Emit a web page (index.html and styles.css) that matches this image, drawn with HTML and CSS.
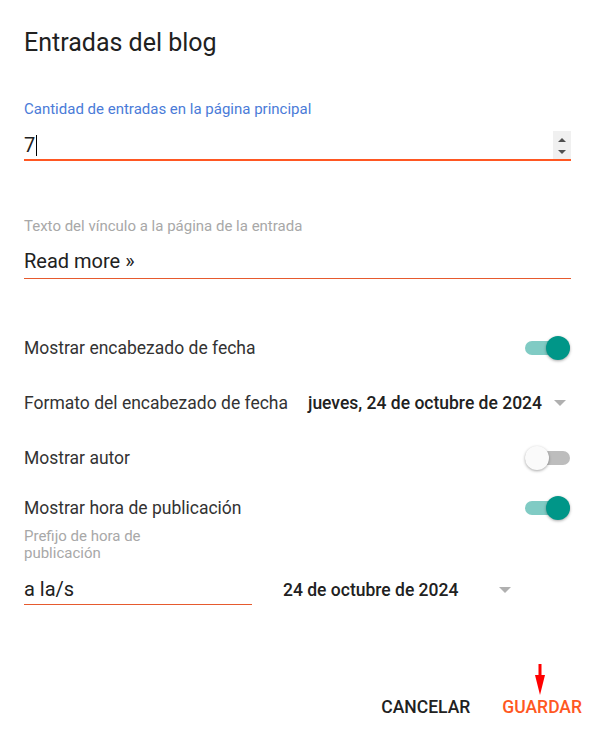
FILE: index.html
```html
<!DOCTYPE html>
<html lang="es">
<head>
    <meta charset="UTF-8">
    <meta name="viewport" content="width=device-width, initial-scale=1.0">
    <title>Entradas del blog</title>
    <link rel="stylesheet" href="styles.css">
</head>
<body>

<div class="dialog">
    <h2 class="dialog-title">Entradas del blog</h2>

    <div class="field field-count">
        <label class="field-label focused">Cantidad de entradas en la página principal</label>
        <div class="field-input active">
            <span class="value">7</span><span class="caret"></span>
            <span class="spinner">
                <svg width="18" height="28" viewBox="0 0 18 28">
                    <path d="M5 11 L9 7 L13 11 Z" fill="#505050"/>
                    <path d="M5 19 L13 19 L9 23 Z" fill="#505050"/>
                </svg>
            </span>
        </div>
    </div>

    <div class="field field-link">
        <label class="field-label">Texto del vínculo a la página de la entrada</label>
        <div class="field-input">
            <span class="value">Read more »</span>
        </div>
    </div>

    <div class="row row-first">
        <span class="row-label">Mostrar encabezado de fecha</span>
        <span class="toggle on"><span class="thumb"></span></span>
    </div>

    <div class="row">
        <span class="row-label">Formato del encabezado de fecha</span>
        <span class="select">
            <span class="select-value">jueves, 24 de octubre de 2024</span>
            <span class="arrow"></span>
        </span>
    </div>

    <div class="row">
        <span class="row-label">Mostrar autor</span>
        <span class="toggle"><span class="thumb"></span></span>
    </div>

    <div class="row row-time">
        <span class="row-label">Mostrar hora de publicación</span>
        <span class="toggle on"><span class="thumb"></span></span>
    </div>

    <div class="time-fields">
        <div class="field field-prefix">
            <label class="field-label">Prefijo de hora de publicación</label>
            <div class="field-input">
                <span class="value">a la/s</span>
            </div>
        </div>
        <span class="select select-time">
            <span class="select-value">24 de octubre de 2024</span>
            <span class="arrow"></span>
        </span>
    </div>

    <div class="actions">
        <button class="btn">CANCELAR</button>
        <button class="btn btn-primary">GUARDAR</button>
        <svg class="pointer" width="12" height="31" viewBox="0 0 12 31">
            <rect x="4.5" y="0" width="3" height="13" fill="#ff0000"/>
            <path d="M1 11 L11 11 L6 31 Z" fill="#ff0000"/>
        </svg>
    </div>
</div>

</body>
</html>
```

FILE: styles.css
```css
body {
    margin: 0;
    background: #ffffff;
    font-family: Roboto, "Liberation Sans", sans-serif;
    color: #212121;
}
.dialog {
    padding: 28px 26px 0 24px;
}
.dialog-title {
    margin: 0;
    font-size: 25px;
    font-weight: 400;
    line-height: 30px;
    color: #212121;
}

/* campos de texto */
.field-label {
    display: block;
    font-size: 15px;
    line-height: 17px;
    color: #a8a8a8;
}
.field-label.focused {
    color: #4a7bd8;
}
.field-input {
    display: flex;
    align-items: center;
    height: 30px;
    border-bottom: 1px solid #e65a2e;
    font-size: 20px;
    color: #212121;
}
.field-input.active {
    border-bottom: 2px solid #ff5722;
}
.field-count {
    margin-top: 43px;
}
.field-count .field-label {
    margin-bottom: 13px;
}
.field-count .field-input {
    height: 28px;
}
.caret {
    width: 1px;
    height: 21px;
    background: #000;
    margin-left: 1px;
}
.spinner {
    margin-left: auto;
    align-self: stretch;
    display: flex;
    align-items: center;
    background: #f0f0f0;
}
.field-link {
    margin-top: 57px;
}
.field-link .field-label {
    margin-bottom: 9px;
}
.field-link .field-input {
    height: 34px;
}

/* filas con interruptor */
.row {
    display: flex;
    align-items: center;
    justify-content: space-between;
    height: 30px;
    margin-top: 25px;
    font-size: 17.5px;
    color: #333333;
}
.row-first {
    margin-top: 54px;
}
.row-time {
    margin-top: 20px;
}
.toggle {
    position: relative;
    width: 45px;
    height: 14px;
    border-radius: 7px;
    background: #bdbdbd;
    margin-right: 1px;
}
.toggle .thumb {
    position: absolute;
    top: -5px;
    left: 0;
    width: 24px;
    height: 24px;
    border-radius: 50%;
    background: #fafafa;
    box-shadow: 0 1px 3px rgba(0, 0, 0, 0.35);
}
.toggle.on {
    background: #80cbc4;
}
.toggle.on .thumb {
    left: auto;
    right: 0;
    background: #009688;
}

/* desplegables */
.select {
    display: flex;
    align-items: center;
    font-size: 17.5px;
    font-weight: 500;
    color: #212121;
}
.arrow {
    width: 0;
    height: 0;
    border-left: 6px solid transparent;
    border-right: 6px solid transparent;
    border-top: 6px solid #b0b0b0;
    margin-left: 12px;
    margin-right: 5px;
}
.time-fields {
    display: flex;
    align-items: flex-end;
    margin-top: 5px;
}
.field-prefix {
    width: 228px;
}
.field-prefix .field-label {
    width: 150px;
    margin-bottom: 11px;
}
.field-prefix .field-input {
    height: 31px;
}
.select-time {
    margin-left: 31px;
    height: 30px;
}
.select-time .arrow {
    margin-left: 41px;
}

/* botones */
.actions {
    position: relative;
    display: flex;
    justify-content: flex-end;
    gap: 20px;
    margin-top: 86px;
    margin-right: -18px;
}
.btn {
    background: none;
    border: none;
    padding: 6px;
    font-family: Roboto, "Liberation Sans", sans-serif;
    font-size: 17.5px;
    font-weight: 500;
    line-height: 20px;
    color: #212121;
    cursor: pointer;
}
.btn-primary {
    color: #ff5722;
    padding-right: 7px;
}
.pointer {
    position: absolute;
    right: 43px;
    top: -27px;
}
```
